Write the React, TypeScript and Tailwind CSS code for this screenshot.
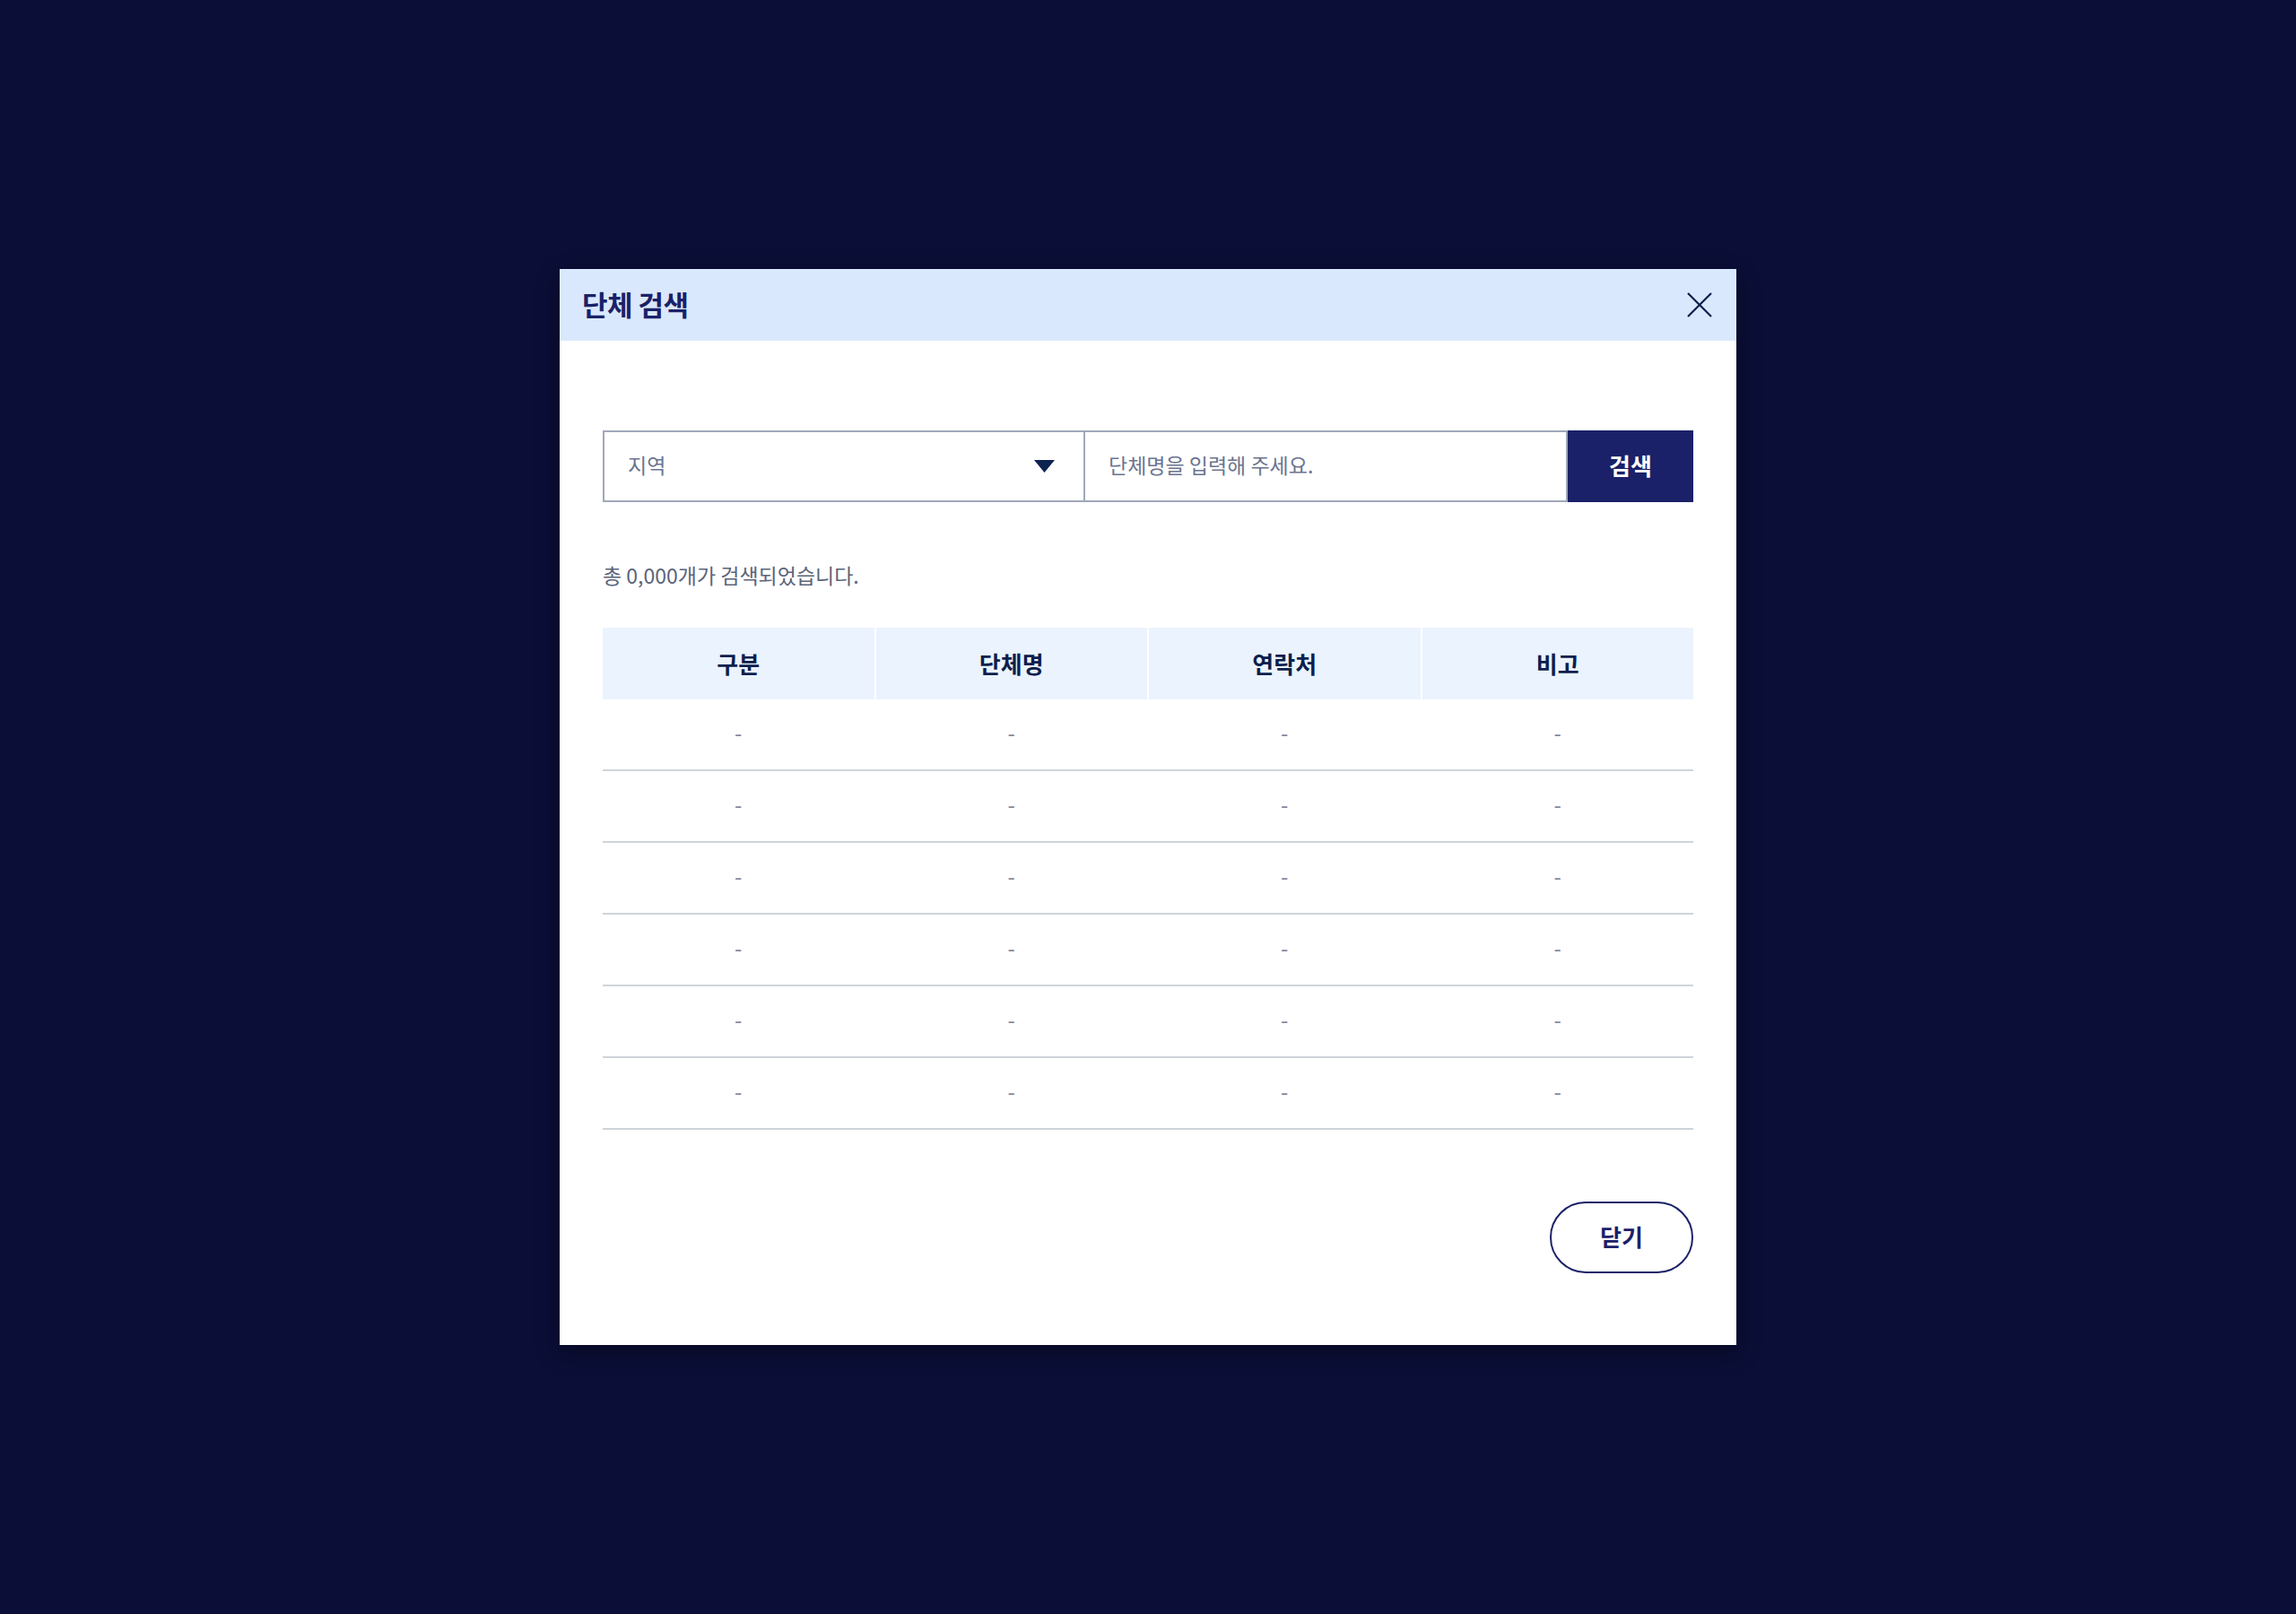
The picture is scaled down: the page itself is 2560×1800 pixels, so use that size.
const columns = ['구분', '단체명', '연락처', '비고'];
const rows = Array.from({ length: 6 }, () => ['-', '-', '-', '-']);

export default function App() {
  return (
    <div
      className="min-h-[1800px] w-full bg-[#0b0e36] flex items-center justify-center"
      style={{ fontFamily: '"Noto Sans CJK KR", "Noto Sans", sans-serif' }}
    >
      <div className="w-[1312px] h-[1200px] bg-white flex flex-col shadow-[0_8px_24px_rgba(0,0,0,0.35)]">
        {/* Header */}
        <div className="h-[80px] shrink-0 bg-[#dae8fd] flex items-center justify-between pl-[25px] pr-[26px]">
          <h2 className="text-[31px] font-bold text-[#1a2168] tracking-[-0.5px] pb-[2px]">단체 검색</h2>
          <button className="text-[#0c1f4a]">
            <svg width="30" height="30" viewBox="0 0 30 30" fill="none" stroke="currentColor" strokeWidth="2.2">
              <path d="M2 2 L28 28 M28 2 L2 28" />
            </svg>
          </button>
        </div>

        <div className="flex flex-col px-[48px] pt-[100px] pb-[80px]">
          {/* Search row */}
          <div className="flex h-[80px]">
            <div className="w-[538px] border-2 border-[#a0a8ba] flex items-center justify-between pl-[26px] pr-[32px]">
              <span className="text-[23px] text-[#6b7490] pb-[3px]">지역</span>
              <svg width="23" height="14" viewBox="0 0 23 14">
                <path d="M0 0 H23 L11.5 14 Z" fill="#0c2350" />
              </svg>
            </div>
            <div className="w-[538px] border-2 border-l-0 border-[#a0a8ba] flex items-center pl-[26px]">
              <span className="text-[23px] text-[#6b7490] pb-[3px]">단체명을 입력해 주세요.</span>
            </div>
            <button className="w-[140px] bg-[#1a2168] text-white text-[26px] font-bold pb-[3px]">검색</button>
          </div>

          {/* Count */}
          <p className="mt-[66px] text-[23px] leading-[30px] text-[#5b6478]">총 0,000개가 검색되었습니다.</p>

          {/* Table */}
          <div className="mt-[44px]">
            <div className="grid grid-cols-4 gap-[2px] h-[80px]">
              {columns.map((c) => (
                <div key={c} className="bg-[#ebf3fe] flex items-center justify-center text-[26px] font-bold text-[#0d1f4d] pb-[2px]">
                  {c}
                </div>
              ))}
            </div>
            {rows.map((r, i) => (
              <div key={i} className="grid grid-cols-4 gap-[2px] h-[80px] border-b-2 border-[#cfd4dc]">
                {r.map((v, j) => (
                  <div key={j} className="flex items-center justify-center text-[24px] text-[#7d849b] pb-[4px]">
                    {v}
                  </div>
                ))}
              </div>
            ))}
          </div>

          {/* Footer */}
          <div className="mt-[80px] flex justify-end">
            <button className="w-[160px] h-[80px] rounded-full border-2 border-[#1a2168] text-[26px] font-bold text-[#1a2168] pb-[3px]">
              닫기
            </button>
          </div>
        </div>
      </div>
    </div>
  );
}
